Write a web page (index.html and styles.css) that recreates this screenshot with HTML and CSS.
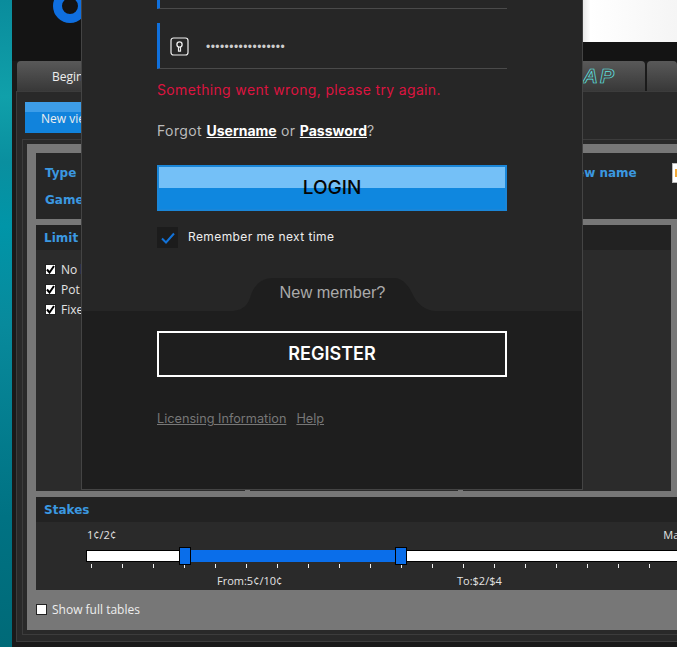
FILE: index.html
```html
<!DOCTYPE html>
<html lang="en">
<head>
<meta charset="utf-8">
<title>Login</title>
<link rel="stylesheet" href="styles.css">
</head>
<body>
<div class="screen">
  <div class="sea"></div>
  <div class="app">
    <header class="header">
      <svg class="logo" width="36" height="24" viewBox="0 0 36 24"><circle cx="17" cy="6" r="12.5" fill="none" stroke="#0f6fe0" stroke-width="9"/><circle cx="17" cy="6" r="6.5" fill="#141414"/></svg>
      <div class="white-panel"></div>
    </header>
    <nav class="tabs">
      <div class="tab tab-begin">Beginners</div>
      <div class="tab tab-map"><span class="map-word">MAP</span></div>
      <div class="tab tab-last"></div>
    </nav>
    <main class="panel">
      <div class="view-btn">New view</div>
      <div class="view">
        <div class="frame">
          <section class="filters">
            <div class="blue-label">Type</div>
            <div class="blue-label">New name</div>
            <div class="name-input"><span class="name-mark"></span></div>
            <div class="blue-label">Game</div>
          </section>
          <section class="limit">
            <div class="sec-head">Limit</div>
            <div class="limit-cols">
              <div class="limit-col">
                <label class="check-row"><span class="check"><svg width="9" height="9" viewBox="0 0 9 9"><path d="M1 4.5 3.5 7.5 8 1" fill="none" stroke="#000" stroke-width="2"/></svg></span>No limit</label>
                <label class="check-row"><span class="check"><svg width="9" height="9" viewBox="0 0 9 9"><path d="M1 4.5 3.5 7.5 8 1" fill="none" stroke="#000" stroke-width="2"/></svg></span>Pot limit</label>
                <label class="check-row"><span class="check"><svg width="9" height="9" viewBox="0 0 9 9"><path d="M1 4.5 3.5 7.5 8 1" fill="none" stroke="#000" stroke-width="2"/></svg></span>Fixed limit</label>
              </div>
              <div class="limit-col"></div>
              <div class="limit-col"></div>
            </div>
          </section>
          <section class="stakes">
            <div class="sec-head">Stakes</div>
            <div class="stakes-body">
              <div class="scale-ends"><span>1¢/2¢</span><span>Max</span></div>
              <div class="track">
                <div class="fill"></div>
                <div class="handle handle-from"></div>
                <div class="handle handle-to"></div>
              </div>
              <div class="ticks"></div>
              <div class="range-values"><span class="from-value">From:5¢/10¢</span><span class="to-value">To:$2/$4</span></div>
            </div>
          </section>
          <label class="full-tables"><span class="check"></span>Show full tables</label>
        </div>
      </div>
    </main>
  </div>

  <div class="modal">
    <div class="modal-top">
      <div class="field field-cut"></div>
      <div class="field">
        <svg class="key-icon" width="19" height="19" viewBox="0 0 19 19"><rect x="1" y="1" width="17" height="17" rx="2.5" fill="none" stroke="#eee" stroke-width="1.2"/><circle cx="9.5" cy="7.5" r="2.6" fill="none" stroke="#eee" stroke-width="1.3"/><path d="M8.5 10v4.2h2V10" fill="none" stroke="#eee" stroke-width="1.2"/></svg>
        <span class="dots">•••••••••••••••••</span>
      </div>
      <p class="error">Something went wrong, please try again.</p>
      <p class="forgot">Forgot <a class="link">Username</a> or <a class="link">Password</a>?</p>
      <div class="login-btn"><span class="login-text">LOGIN</span></div>
      <div class="remember">
        <span class="remember-box"><svg width="14" height="12" viewBox="0 0 14 12"><path d="M1 6.5 5 10.5 13 1.5" fill="none" stroke="#1272d8" stroke-width="2"/></svg></span>
        <span class="remember-text">Remember me next time</span>
      </div>
      <div class="member-tab">
        <svg class="member-shape" width="205" height="33" viewBox="0 0 205 33"><path d="M0 33C14 33 18 24 20 17 23 8 30 0 42 0H163C172 0 178 8 182 17 186 26 195 33 205 33Z" fill="#1e1e1e"/></svg>
        <span class="member-text">New member?</span>
      </div>
    </div>
    <div class="modal-bottom">
      <div class="register-btn">REGISTER</div>
      <div class="legal"><a>Licensing Information</a><a>Help</a></div>
    </div>
  </div>
</div>
</body>
</html>
```
FILE: styles.css
```css
* { box-sizing: border-box; }
html, body { margin: 0; padding: 0; background: #141414; }
body { font-family: "Open Sans", "Liberation Sans", sans-serif; font-size: 12px; color: #e4e4e4; }
p { margin: 0; }

.screen { position: relative; display: flex; width: 677px; height: 647px; overflow: hidden; }
.sea { flex: 0 0 12px; background: linear-gradient(180deg, #0a8c9c 0%, #10a0aa 15%, #0a8f9f 25%, #0095a8 35%, #088a9c 50%, #007283 80%, #006a78 100%); }
.app { flex: 0 0 665px; min-width: 0; display: flex; flex-direction: column; background: #1a1a1a; }

.header { display: flex; align-items: flex-start; height: 61px; flex: none; padding-left: 41px; background: #141414; }
.logo { display: block; }
.white-panel { margin-left: auto; width: 95px; height: 42px; background: linear-gradient(90deg, #e6e6e6 0, #fff 8px, #f5f5f5 100%); }

.tabs { display: flex; gap: 2px; height: 30px; flex: none; padding-left: 5px; }
.tab { height: 30px; border-radius: 4px 4px 0 0; background: linear-gradient(180deg, #595959 0%, #383838 100%); color: #eee; line-height: 31px; }
.tab-begin { flex: 0 0 230px; padding-left: 35px; }
.tab-map { flex: 0 0 396px; text-align: right; padding-right: 29px; }
.tab-last { flex: 0 0 30px; }
.map-word { font: italic 700 21px/30px "Liberation Sans", sans-serif; letter-spacing: 2px; color: transparent; -webkit-text-stroke: .7px #5fe8e6; }

.panel { flex: 1; margin: 0 -40px 5px 4px; padding: 10px 0 0 8px; border: 1px solid #3c3c3c; background: #292929; }
.view-btn { width: 90px; height: 31px; padding: 8px 0 0 16px; color: #eee; background: linear-gradient(180deg, #3d9de8 0, #3d9de8 10px, #1183dc 10px, #1183dc 100%); }
.view { margin: 6px 0 0 -3px; padding: 4px 0 4px 4px; border: 1px solid #3c3c3c; border-right: 0; }
.frame { padding: 9px 0 0 9px; background: #777; height: 486px; }

.filters { display: grid; grid-template-columns: 521px 106px 100px; grid-template-rows: 27px 27px; align-content: center; width: 690px; height: 66px; padding-left: 9px; align-items: center; background: #262626; }
.blue-label, .sec-head { font: 700 12px "DejaVu Sans", sans-serif; color: #3b98e0; }
.name-input { display: flex; align-items: center; width: 100px; height: 20px; padding-left: 2px; border: 1px solid #bbb; background: #fff; }
.name-mark { width: 3px; height: 8px; background: #f0a838; }

.limit { width: 635px; height: 266px; margin-top: 6px; }
.sec-head { height: 25px; padding: 0 0 0 8px; line-height: 27px; background: #222; }
.limit-cols { display: grid; grid-template-columns: 209px 208px 208px; gap: 5px; height: 241px; }
.limit-col { padding-top: 9px; background: #2b2b2b; }
.check-row { display: flex; align-items: center; gap: 5px; height: 20px; padding-left: 9px; }
.check { display: flex; align-items: center; justify-content: center; flex: none; width: 11px; height: 11px; border: 1px solid #222; background: #fff; }
.check svg { display: block; }

.stakes { width: 690px; height: 93px; margin-top: 6px; background: #2a2a2a; }
.stakes-body { padding: 5px 0 0 50px; }
.scale-ends { display: flex; justify-content: space-between; width: 599px; padding-left: 1px; height: 16px; font-size: 11px; line-height: 16px; white-space: nowrap; }
.track { position: relative; width: 640px; height: 12px; margin-top: 7px; border: 1px solid #000; background: #fff; }
.fill { position: absolute; left: 104px; top: -1px; width: 208px; height: 12px; background: #0a6eea; }
.handle { position: absolute; top: -4px; width: 12px; height: 18px; border: 1px solid #000; background: #0a6eea; }
.handle-from { left: 92px; }
.handle-to { left: 308px; }
.ticks { width: 640px; height: 4px; margin-top: 2px; background: repeating-linear-gradient(90deg, transparent 0, transparent 5px, #eee 5px, #eee 6px, transparent 6px, transparent 31px); }
.range-values { display: flex; height: 16px; margin-top: 5px; font-size: 11px; line-height: 16px; }
.from-value { margin-left: 131px; width: 240px; }

.full-tables { display: flex; align-items: center; gap: 5px; height: 38px; color: #eee; }

.modal { position: absolute; left: 81px; top: 0; display: flex; flex-direction: column; width: 502px; height: 490px; border: 1px solid #444; border-top: 0; background: #262626; font-family: Inter, sans-serif; }
.modal-top { height: 311px; padding-left: 75px; flex: none; }
.field { display: flex; align-items: center; width: 350px; height: 46px; margin-top: 14px; padding: 2px 0 0 10px; border-left: 3px solid #1070dc; border-bottom: 1px solid #4a4a4a; }
.field-cut { height: 9px; margin-top: 0; padding: 0; }
.key-icon { display: block; flex: none; }
.dots { margin-left: 17px; font: 12px/1 "Liberation Sans", sans-serif; color: #ccc; letter-spacing: .45px; }
.error { margin-top: 11px; height: 20px; font-size: 14px; line-height: 20px; letter-spacing: .35px; color: #dc1440; }
.forgot { margin-top: 21px; height: 20px; font-size: 14px; line-height: 20px; letter-spacing: .4px; color: #bbb; }
.link { color: #fff; font-weight: 700; letter-spacing: 0; text-decoration: underline; }
.login-btn { display: flex; align-items: center; justify-content: center; width: 350px; height: 46px; margin-top: 24px; border: 2px solid #1a86d8; background: linear-gradient(180deg, #74c0f7 0, #74c0f7 21px, #0f87df 21px, #0f87df 100%); color: #050505; font-size: 19px; font-weight: 500; }
.login-text { padding-bottom: 2px; }
.remember { display: flex; align-items: center; gap: 10px; margin-top: 16px; height: 21px; font-size: 12px; letter-spacing: .4px; color: #eee; }
.remember-text { padding-bottom: 2px; }
.remember-box { display: flex; align-items: center; justify-content: center; width: 21px; height: 21px; background: #1c1c1c; }
.remember-box svg { display: block; }
.member-tab { position: relative; display: flex; align-items: center; justify-content: center; width: 205px; height: 33px; margin: 30px 0 0 74px; padding-right: 2px; }
.member-shape { position: absolute; left: 0; top: 0; }
.member-text { position: relative; top: -2px; font: 16.3px "Liberation Sans", sans-serif; color: #aaa; }
.modal-bottom { flex: 1; padding: 20px 0 0 75px; background: #1e1e1e; }
.register-btn { width: 350px; height: 46px; border: 2px solid #fff; color: #fff; font-size: 18px; font-weight: 600; line-height: 41px; text-align: center; }
.legal { display: flex; gap: 10px; margin-top: 34px; font-size: 12.7px; color: #777; }
.legal a { text-decoration: underline; }
```
